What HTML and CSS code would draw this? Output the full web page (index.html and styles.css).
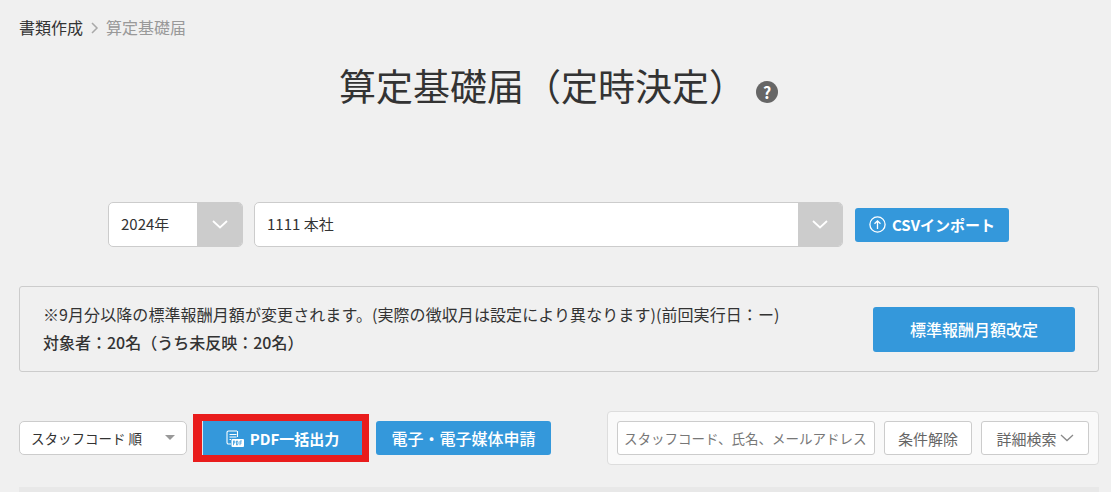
FILE: index.html
```html
<!DOCTYPE html>
<html lang="ja">

<head>
    <meta charset="utf-8">
    <title>算定基礎届</title>
    <link rel="stylesheet" href="styles.css">
</head>

<body>
    <div class="page">
        <div class="crumbs">
            <a class="crumb-link">書類作成</a>
            <svg class="crumb-sep" width="10" height="12" viewBox="0 0 10 12"><path d="M2 1l5 5-5 5" fill="none" stroke="#a9a9a9" stroke-width="1.5"/></svg>
            <span class="crumb-now">算定基礎届</span>
        </div>

        <div class="title-row">
            <h1 class="title">算定基礎届（定時決定）</h1>
            <span class="help">?</span>
        </div>

        <div class="filters">
            <div class="select select-year">
                <span class="select-text">2024年</span>
                <span class="select-arrow">
                    <svg width="16" height="9" viewBox="0 0 16 9"><path d="M1 1l7 6.500 7-6.500" fill="none" stroke="#fff" stroke-width="1.800"/></svg>
                </span>
            </div>
            <div class="select select-office">
                <span class="select-text">1111 本社</span>
                <span class="select-arrow">
                    <svg width="16" height="9" viewBox="0 0 16 9"><path d="M1 1l7 6.500 7-6.500" fill="none" stroke="#fff" stroke-width="1.800"/></svg>
                </span>
            </div>
            <a class="btn btn-csv">
                <svg width="17" height="17" viewBox="0 0 17 17"><circle cx="8.500" cy="8.500" r="7.600" fill="none" stroke="#fff" stroke-width="1.300"/><path d="M8.500 13V5M5.500 7.800l3-3 3 3" fill="none" stroke="#fff" stroke-width="1.300"/></svg>
                CSVインポート
            </a>
        </div>

        <div class="notice">
            <div class="notice-text">
                <p class="notice-line">※9月分以降の標準報酬月額が変更されます。(実際の徴収月は設定により異なります)(前回実行日：ー)</p>
                <p class="notice-count">対象者：20名（うち未反映：20名）</p>
            </div>
            <a class="btn btn-revise">標準報酬月額改定</a>
        </div>

        <div class="toolbar">
            <div class="sort">
                <span>スタッフコード 順</span>
                <i class="sort-caret"></i>
            </div>
            <div class="marked">
                <a class="btn btn-pdf">
                    <svg width="18" height="17" viewBox="0 0 18 17"><path d="M11 1H2.500A1.500 1.500 0 0 0 1 2.500v10A1.500 1.500 0 0 0 2.500 14H5M3.500 4.500h7M3.500 7h7M3.500 9.500H5" fill="none" stroke="#fff" stroke-width="1.100"/><path d="M11.500 1v6" stroke="#fff" stroke-width="1.100"/><rect x="5.500" y="9" width="12.500" height="8" rx="1" fill="#fff"/><path d="M7.500 15.200v-4.400M7.500 11h1.300v2H7.500M10.500 11v4h1l.6-2-.6-2zM14 15.200V11h2M14 13h1.700" fill="none" stroke="#3498db" stroke-width=".8"/></svg>
                    PDF一括出力
                </a>
            </div>
            <a class="btn btn-media">電子・電子媒体申請</a>
            <div class="search">
                <input class="search-input" type="text" placeholder="スタッフコード、氏名、メールアドレス">
                <a class="btn-plain btn-clear">条件解除</a>
                <a class="btn-plain btn-detail">
                    詳細検索
                    <svg width="14" height="8" viewBox="0 0 14 8"><path d="M1 1l6 5.500L13 1" fill="none" stroke="#8a8a8a" stroke-width="1.300"/></svg>
                </a>
            </div>
        </div>

        <div class="table-top"></div>
    </div>
</body>

</html>
```

FILE: styles.css
```css
* {
    box-sizing: border-box;
}

html,
body {
    margin: 0;
    height: 492px;
    overflow: hidden;
    background: #f0f0f0;
}

body {
    font-family: "Noto Sans CJK JP", "Noto Sans", sans-serif;
    color: #333;
}

.page {
    padding: 16px 12px 0 19px;
}

.crumbs {
    display: flex;
    align-items: center;
    height: 23px;
    font-size: 16px;
    line-height: 23px;
}

.crumb-link {
    color: #333;
}

.crumb-sep {
    margin: 0 6px 0 7px;
}

.crumb-now {
    color: #999;
}

.title-row {
    display: flex;
    align-items: center;
    margin: 20px 0 0 320px;
    height: 52px;
}

.title {
    margin: 0;
    font-size: 37px;
    font-weight: 400;
    line-height: 52px;
}

.help {
    width: 22px;
    height: 22px;
    margin: 14px 0 0 10px;
    border-radius: 50%;
    background: #666;
    color: #fff;
    font-size: 16px;
    font-weight: 700;
    line-height: 22px;
    text-align: center;
}

.filters {
    display: flex;
    align-items: center;
    margin: 91px 0 0 89px;
}

.select {
    display: flex;
    height: 45px;
    background: #fff;
    border: 1px solid #ccc;
    border-radius: 5px;
    overflow: hidden;
    font-size: 15px;
}

.select-year {
    width: 135px;
}

.select-office {
    width: 589px;
    margin-left: 11px;
}

.select-text {
    flex: 1;
    padding-left: 12px;
    line-height: 41px;
}

.select-arrow {
    display: flex;
    align-items: center;
    justify-content: center;
    width: 45px;
    background: #ccc;
}

.select-office .select-arrow {
    width: 44px;
}

.btn {
    display: flex;
    align-items: center;
    justify-content: center;
    background: #3498db;
    border-radius: 3px;
    color: #fff;
    font-weight: 500;
}

.btn-csv {
    gap: 6px;
    width: 154px;
    height: 34px;
    margin-left: 12px;
    font-size: 15px;
    font-weight: 700;
}

.notice {
    display: flex;
    align-items: center;
    justify-content: space-between;
    width: 1080px;
    height: 86px;
    margin-top: 39px;
    padding: 0 23px 0 23px;
    border: 1px solid #ccc;
    border-radius: 3px;
}

.notice-text {
    padding-bottom: 2px;
}

.notice-line,
.notice-count {
    margin: 0;
    font-size: 16px;
    line-height: 28px;
}

.notice-line {
    letter-spacing: .08px;
}

.notice-count {
    font-weight: 500;
}

.btn-revise {
    width: 202px;
    height: 45px;
    font-size: 16px;
}

.toolbar {
    display: flex;
    align-items: center;
    width: 1080px;
    height: 54px;
    margin-top: 39px;
}

.sort {
    display: flex;
    align-items: center;
    justify-content: space-between;
    width: 168px;
    height: 34px;
    padding: 0 11px 0 11px;
    background: #fff;
    border: 1px solid #ccc;
    border-radius: 5px;
    font-size: 13.500px;
}

.sort-caret {
    width: 0;
    height: 0;
    margin-top: -1px;
    border-left: 5px solid transparent;
    border-right: 5px solid transparent;
    border-top: 5px solid #999;
}

.marked {
    margin-left: 6px;
    padding: 7px 7px 7px 9px;
    background: #e91c1c;
}

.btn-pdf {
    gap: 6px;
    width: 160px;
    height: 34px;
    border-left: 1px solid #dfe9f0;
    border-radius: 0;
    font-size: 15px;
    font-weight: 700;
}

.btn-media {
    width: 175px;
    height: 34px;
    margin-left: 7px;
    font-size: 16px;
}

.search {
    display: flex;
    align-items: center;
    width: 492px;
    height: 54px;
    margin-left: auto;
    padding: 0 9px;
    background: #f9f9f9;
    border: 1px solid #ddd;
    border-radius: 4px;
}

.search-input {
    width: 258px;
    height: 34px;
    padding: 0 6px;
    background: #fff;
    border: 1px solid #ccc;
    border-radius: 3px;
    font-family: inherit;
    font-size: 13.500px;
}

.search-input::placeholder {
    color: #777;
    opacity: 1;
}

.btn-plain {
    display: flex;
    align-items: center;
    justify-content: center;
    height: 34px;
    background: #fff;
    border: 1px solid #ccc;
    border-radius: 3px;
    color: #666;
    font-size: 15px;
}

.btn-clear {
    width: 88px;
    margin-left: 9px;
}

.btn-detail {
    gap: 3px;
    width: 108px;
    margin-left: 9px;
}

.table-top {
    width: 1080px;
    height: 5px;
    margin-top: 22px;
    background: #e8e8e8;
}
```
